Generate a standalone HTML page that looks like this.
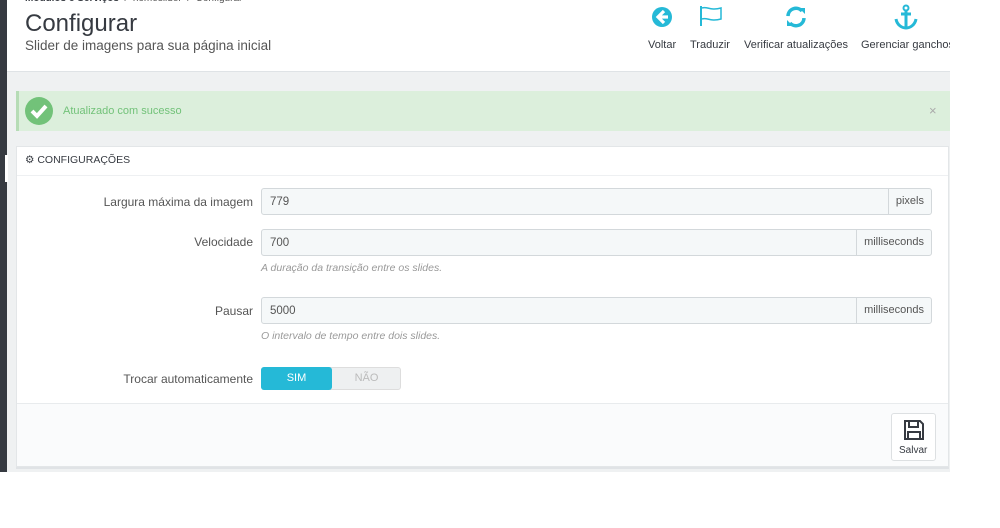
<!DOCTYPE html>
<html><head><meta charset="utf-8"><style>
*{box-sizing:border-box;margin:0;padding:0}
body{width:1000px;height:528px;background:#fff;font-family:"Liberation Sans",sans-serif;position:relative;overflow:hidden;color:#555}
.abs{position:absolute}
.side{left:0;top:0;width:7px;height:472px;background:#363a41}
.hdr{left:7px;top:0;width:943px;height:72px;background:#fff;border-bottom:1px solid #dfe3e6}
.bg{left:7px;top:72px;width:943px;height:400px;background:#eff1f2}
.t{font-size:24px;color:#363a41;left:25px;top:10px}
.st{font-size:13.5px;color:#555;left:25px;top:38px}
.tb{font-size:11px;color:#363a41;top:39px}
.alert{left:16px;top:91px;width:934px;height:40px;background:#dcefdc;border-left:3px solid #b6dcb6}
.panel{left:16px;top:146px;width:933px;height:321px;background:#fff;border:1px solid #e3e6e8;box-shadow:0 2px 0 #e0e3e6}
.lbl{font-size:12px;color:#555;text-align:right;width:240px;left:13px}
.inp{left:261px;width:671px;height:27px;background:#f5f8f9;border:1px solid #d3d8db;border-radius:3px;font-size:11.5px;color:#555;padding:7px 8px}
.add{position:absolute;right:0;top:0;height:25px;border-left:1px solid #d3d8db;padding:6px 7px;font-size:11px;color:#555}
.help{left:261px;font-size:10.5px;font-style:italic;color:#999}
</style></head><body>
<div class="abs side"></div>
<div class="abs hdr"></div>
<div class="abs bg"></div>
<div class="abs" style="left:25px;top:-7px;font-size:10px;color:#555"><b style="color:#363a41">Módulos e Serviços</b> &nbsp;/&nbsp; homeslider &nbsp;/&nbsp; Configurar</div>
<div class="abs t">Configurar</div>
<div class="abs st">Slider de imagens para sua página inicial</div>
<svg class="abs" style="left:651px;top:6px" width="22" height="22" viewBox="0 0 22 22"><circle cx="11" cy="11" r="10" fill="#25b9d7"/><path d="M13 5 L7 11 L13 17 M7 11 H17" stroke="#fff" stroke-width="3.2" fill="none"/></svg>
<svg class="abs" style="left:699px;top:5px" width="24" height="22" viewBox="0 0 24 22"><path d="M2 1V21" stroke="#25b9d7" stroke-width="2"/><path d="M3 3C8 1 11 6 22 3V14C11 17 8 12 3 14" stroke="#25b9d7" stroke-width="1.5" fill="none"/></svg>
<svg class="abs" style="left:785px;top:6px" width="22" height="22" viewBox="0 0 22 22"><path d="M3 10A8 8 0 0 1 17 5" stroke="#25b9d7" stroke-width="3.5" fill="none"/><path d="M14 2H20V8Z" fill="#25b9d7"/><path d="M19 12A8 8 0 0 1 5 17" stroke="#25b9d7" stroke-width="3.5" fill="none"/><path d="M8 20H2V14Z" fill="#25b9d7"/></svg>
<svg class="abs" style="left:894px;top:4px" width="24" height="26" viewBox="0 0 24 26"><circle cx="12" cy="4" r="2.5" stroke="#25b9d7" stroke-width="2" fill="none"/><path d="M12 6V24M7 10H17M2 15C3 21 8 24 12 24C16 24 21 21 22 15" stroke="#25b9d7" stroke-width="3" fill="none"/></svg>
<div class="abs tb" style="left:648px">Voltar</div>
<div class="abs tb" style="left:690px">Traduzir</div>
<div class="abs tb" style="left:744px">Verificar atualizações</div>
<div class="abs tb" style="left:861px;width:89px;overflow:hidden;white-space:nowrap">Gerenciar ganchos</div>
<div class="abs alert"></div>
<svg class="abs" style="left:25px;top:97px" width="28" height="28" viewBox="0 0 28 28"><circle cx="14" cy="14" r="14" fill="#72c279"/><path d="M7 14L12 19L21 9" stroke="#fff" stroke-width="4" fill="none"/></svg>
<div class="abs" style="left:63px;top:105px;font-size:11px;color:#72c279">Atualizado com sucesso</div>
<div class="abs" style="left:929px;top:103px;font-size:13px;color:#aaa">×</div>
<div class="abs panel"></div>
<div class="abs" style="left:17px;top:175px;width:931px;height:1px;background:#eef0f2"></div>
<div class="abs" style="left:25px;top:154px;font-size:10.5px;color:#363a41">⚙ CONFIGURAÇÕES</div>
<div class="abs" style="left:5px;top:155px;width:3px;height:27px;background:#fff"></div>
<div class="abs lbl" style="top:195px">Largura máxima da imagem</div>
<div class="abs inp" style="top:188px">779<span class="add">pixels</span></div>
<div class="abs lbl" style="top:235px">Velocidade</div>
<div class="abs inp" style="top:229px">700<span class="add">milliseconds</span></div>
<div class="abs help" style="top:262px">A duração da transição entre os slides.</div>
<div class="abs lbl" style="top:304px">Pausar</div>
<div class="abs inp" style="top:297px">5000<span class="add">milliseconds</span></div>
<div class="abs help" style="top:330px">O intervalo de tempo entre dois slides.</div>
<div class="abs lbl" style="top:372px">Trocar automaticamente</div>
<div class="abs" style="left:261px;top:367px;width:140px;height:23px;background:#eef0f1;border:1px solid #ddd;border-radius:3px"></div>
<div class="abs" style="left:261px;top:367px;width:71px;height:23px;background:#25b9d7;border-radius:3px;color:#fff;font-size:11px;text-align:center;line-height:23px">SIM</div>
<div class="abs" style="left:332px;top:367px;width:69px;height:23px;color:#bbb;font-size:11px;text-align:center;line-height:23px">NÃO</div>
<div class="abs" style="left:17px;top:403px;width:931px;height:63px;background:#fafbfc;border-top:1px solid #e8ebed"></div>
<div class="abs" style="left:891px;top:413px;width:45px;height:48px;background:#fff;border:1px solid #dde0e2;border-radius:3px"></div>
<svg class="abs" style="left:903px;top:419px" width="22" height="22" viewBox="0 0 22 22"><path d="M2 2H17L20 5V20H2Z M6 2V8H15V2 M5 20V13H17V20" stroke="#363a41" stroke-width="2" fill="none"/></svg>
<div class="abs" style="left:899px;top:445px;font-size:10px;color:#363a41">Salvar</div>
</body></html>
